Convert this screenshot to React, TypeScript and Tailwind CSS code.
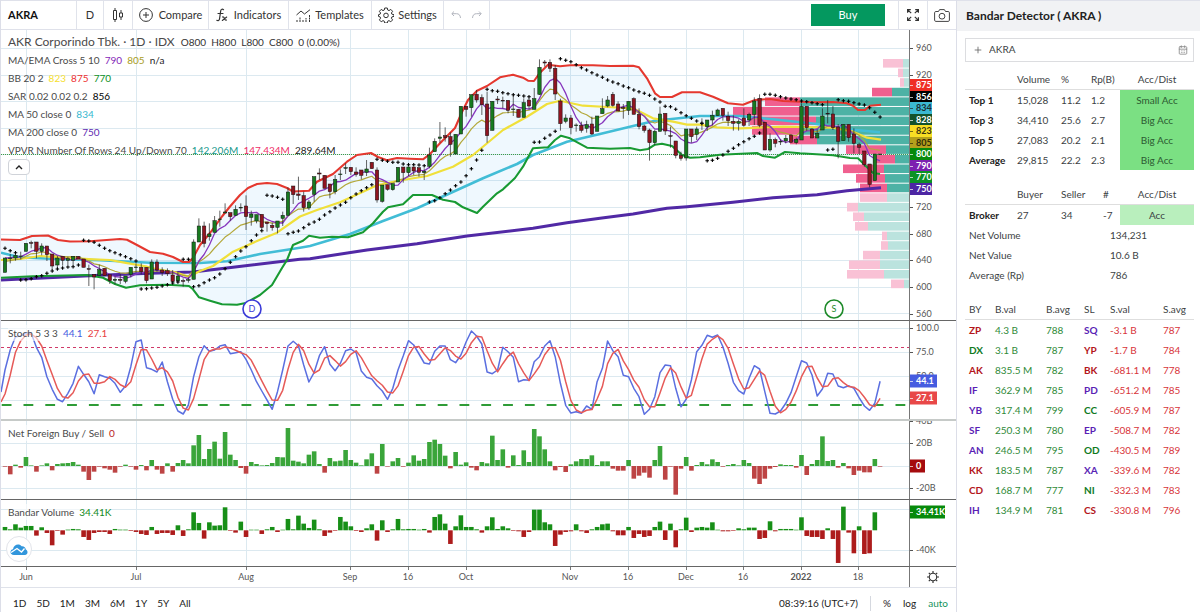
import type { ReactNode } from "react";
import { CalendarDays, Plus } from "lucide-react";

// Vertical values of the price and stochastic data are stored at 3x resolution.
const UNIT = 3;
const STEP = 5.24;
const barX = (i: number) => 5 + i * STEP;

const MONTHS: [number, string, boolean?][] = [
  [26, "Jun"],
  [136, "Jul"],
  [246, "Aug"],
  [350, "Sep"],
  [408, "16"],
  [466, "Oct"],
  [570, "Nov"],
  [628, "16"],
  [686, "Dec"],
  [743, "16"],
  [801, "2022", true],
  [858, "18"],
];

// [high, body top, body bottom, low, up]
const CANDLES: number[][] = [
  [774, 774, 817, 817, 1], [762, 774, 776, 790, 1], [758, 766, 774, 782, 1], [755, 768, 770, 778, 1],
  [730, 730, 754, 754, 1], [722, 728, 730, 745, 0], [726, 726, 754, 775, 0], [730, 738, 754, 766, 1],
  [738, 738, 764, 783, 0], [762, 762, 798, 810, 0], [768, 774, 795, 805, 1], [769, 769, 781, 797, 0],
  [770, 776, 781, 795, 1], [769, 769, 781, 796, 1], [769, 769, 777, 777, 0], [777, 777, 802, 802, 0],
  [794, 806, 808, 858, 0], [823, 823, 831, 868, 0], [794, 809, 826, 826, 1], [805, 805, 827, 827, 0],
  [824, 824, 842, 852, 0], [829, 838, 841, 853, 1], [822, 838, 841, 852, 0], [828, 828, 844, 850, 1],
  [802, 802, 823, 832, 1], [790, 801, 803, 818, 1], [790, 802, 815, 823, 0], [802, 802, 842, 850, 0],
  [778, 786, 837, 837, 1], [778, 786, 810, 815, 0], [802, 810, 818, 828, 0], [805, 812, 821, 828, 0],
  [810, 825, 845, 852, 0], [815, 828, 843, 850, 1], [835, 842, 844, 860, 0], [832, 839, 841, 848, 1],
  [718, 726, 838, 838, 1], [655, 678, 726, 726, 1], [665, 678, 730, 742, 0], [670, 702, 710, 722, 1],
  [648, 662, 697, 697, 1], [632, 657, 659, 680, 1], [610, 636, 639, 640, 1], [638, 638, 650, 662, 0],
  [616, 628, 646, 646, 1], [610, 622, 624, 635, 1], [586, 618, 650, 690, 0], [632, 642, 652, 677, 1],
  [644, 644, 663, 670, 1], [643, 643, 682, 688, 0], [666, 666, 671, 695, 0], [668, 676, 683, 692, 0],
  [663, 663, 682, 700, 1], [635, 646, 655, 678, 1], [562, 576, 646, 646, 1], [558, 558, 584, 612, 0],
  [530, 582, 586, 600, 0], [575, 587, 623, 635, 0], [600, 606, 624, 630, 1], [530, 530, 583, 605, 1],
  [505, 519, 522, 540, 0], [526, 526, 565, 565, 0], [552, 552, 575, 595, 0], [525, 538, 575, 583, 1],
  [508, 522, 524, 540, 1], [490, 503, 505, 522, 1], [502, 502, 515, 525, 0], [502, 516, 523, 530, 0],
  [510, 510, 526, 538, 0], [480, 507, 517, 528, 1], [487, 487, 506, 506, 0], [502, 510, 600, 608, 0],
  [555, 555, 604, 608, 1], [554, 554, 568, 572, 0], [551, 551, 569, 572, 1], [502, 502, 546, 546, 1],
  [501, 501, 518, 548, 0], [501, 501, 518, 528, 1], [501, 501, 513, 525, 0], [503, 503, 517, 530, 0],
  [505, 514, 518, 540, 1], [443, 465, 499, 505, 1], [415, 424, 455, 455, 1], [366, 411, 415, 428, 1],
  [382, 407, 413, 425, 0], [397, 410, 433, 470, 0], [403, 403, 462, 462, 1], [319, 319, 402, 402, 1],
  [319, 319, 328, 350, 0], [284, 284, 323, 350, 1], [270, 283, 300, 308, 0], [283, 293, 314, 345, 0],
  [275, 312, 407, 428, 0], [304, 304, 391, 391, 1], [288, 297, 300, 312, 0], [290, 301, 303, 325, 0],
  [301, 301, 331, 340, 0], [285, 327, 329, 348, 1], [328, 328, 352, 352, 0], [295, 308, 352, 352, 1],
  [293, 300, 318, 328, 0], [264, 296, 328, 328, 1], [178, 202, 283, 285, 1], [180, 186, 189, 200, 0],
  [178, 187, 205, 216, 0], [195, 205, 282, 300, 0], [296, 303, 371, 392, 0], [343, 354, 364, 370, 1],
  [345, 354, 383, 403, 0], [370, 375, 377, 395, 1], [365, 376, 391, 398, 0], [362, 374, 385, 398, 1],
  [350, 372, 402, 405, 0], [348, 348, 394, 394, 1], [295, 326, 341, 341, 1], [288, 300, 318, 322, 1],
  [276, 283, 316, 320, 0], [304, 312, 333, 333, 0], [312, 323, 325, 356, 0], [304, 304, 331, 345, 1],
  [292, 296, 343, 343, 0], [325, 343, 380, 388, 0], [374, 378, 391, 398, 0], [386, 390, 428, 482, 0],
  [390, 394, 428, 435, 1], [320, 342, 394, 394, 1], [340, 340, 393, 405, 0], [380, 407, 409, 443, 0],
  [423, 423, 466, 475, 0], [455, 466, 475, 482, 0], [387, 387, 474, 482, 1], [387, 387, 410, 428, 0],
  [380, 387, 403, 420, 1], [355, 369, 371, 390, 1], [360, 360, 380, 393, 1], [332, 346, 360, 376, 1],
  [326, 330, 347, 347, 1], [325, 325, 346, 362, 0], [335, 349, 362, 378, 0], [346, 364, 370, 392, 0],
  [358, 365, 370, 392, 1], [325, 354, 376, 380, 0], [338, 343, 360, 378, 1], [292, 303, 343, 375, 1],
  [283, 295, 376, 382, 0], [365, 367, 450, 450, 0], [400, 418, 450, 455, 1], [413, 419, 430, 442, 0],
  [418, 424, 426, 435, 1], [405, 415, 423, 430, 1], [403, 405, 427, 427, 0], [413, 418, 428, 433, 1],
  [310, 319, 420, 420, 1], [319, 319, 383, 392, 0], [385, 387, 414, 414, 0], [388, 400, 414, 414, 1],
  [325, 348, 390, 390, 1], [300, 340, 342, 370, 0], [318, 342, 383, 390, 0], [372, 381, 424, 475, 0],
  [373, 373, 422, 422, 1], [373, 373, 413, 425, 0], [385, 402, 430, 460, 0], [428, 434, 442, 462, 0],
  [453, 453, 494, 500, 0], [492, 492, 553, 562, 0], [462, 462, 542, 542, 1], [462, 462, 464, 464, 1],
];

const SAR = [
  745, 752, 758, 840, 839, 836, 830, 827, 820, 813, 807, 804, 801, 800, 795, 721, 723, 727, 736, 745, 752, 758, 764,
  770, 776, 783, 867, 866, 864, 862, 858, 854, 849, 846, 778, 778, 860, 857, 848, 840, 833, 822, 806, 787, 770, 753,
  740, 722, 705, 692, 586, 588, 592, 598, 701, 697, 693, 683, 673, 666, 658, 645, 635, 624, 615, 607, 593, 582, 572,
  563, 554, 478, 481, 484, 487, 487, 492, 494, 494, 495, 497, 606, 602, 593, 581, 570, 557, 546, 527, 506, 480, 451,
  268, 272, 274, 278, 281, 284, 286, 288, 290, 427, 426, 415, 405, 394, 176, 181, 185, 194, 203, 210, 218, 225, 232,
  240, 246, 251, 258, 263, 270, 275, 280, 286, 297, 306, 319, 320, 328, 338, 347, 355, 363, 370, 482, 481, 475, 465,
  454, 445, 434, 425, 416, 409, 399, 283, 283, 286, 290, 294, 297, 299, 303, 305, 308, 311, 314, 450, 448, 299, 302,
  304, 308, 312, 315, 323, 337, 351,
];

const STOCH_K = [
  150, 90, 50, 48, 38, 40, 82, 112, 170, 208, 238, 245, 220, 190, 139, 163, 185, 221, 164, 170, 175, 190, 217, 198,
  140, 65, 60, 143, 148, 156, 126, 185, 238, 273, 282, 255, 170, 110, 77, 94, 90, 78, 74, 101, 98, 95, 118, 150, 185,
  213, 240, 268, 215, 150, 78, 64, 77, 135, 186, 157, 107, 80, 133, 152, 130, 92, 87, 98, 153, 172, 177, 197, 213,
  238, 205, 150, 108, 62, 75, 102, 129, 132, 94, 78, 78, 119, 128, 105, 66, 33, 48, 72, 156, 161, 150, 82, 95, 112,
  185, 179, 181, 125, 110, 78, 62, 110, 190, 256, 279, 275, 280, 258, 268, 185, 145, 63, 92, 110, 166, 170, 205, 230,
  283, 268, 230, 158, 135, 137, 205, 260, 238, 180, 95, 76, 46, 52, 45, 80, 130, 187, 212, 222, 175, 137, 147, 215,
  280, 282, 273, 250, 218, 170, 122, 129, 165, 228, 207, 160, 162, 198, 203, 197, 205, 233, 258, 271, 250, 184,
];

const FOREIGN = [
  -2, -25, 4, -5, 27, 1, -17, 1, 8, -13, 6, 8, 9, 12, 4, -17, -42, -17, -2, -7, -11, -20, -2, 4, -2, -11, 3, -13, 18,
  -11, -23, 8, -17, 9, 18, 8, 62, 93, 21, 51, 73, 22, 102, 34, 18, -6, -23, 12, 6, 1, 3, 9, 27, 26, 114, 16, 13, 8,
  34, 44, 6, -20, 24, 14, 16, 48, 18, 10, 2, 20, 38, -23, 66, -1, 14, 24, -2, 10, 32, 16, 21, 72, 79, 66, 31, -7, 42,
  4, 11, -5, -13, 12, 8, 91, 18, 50, -5, 32, 3, 47, 12, 111, 89, 50, 14, -13, -3, -18, 5, 14, 21, 21, 32, 3, 14, 14,
  -8, -14, -14, 18, -38, -29, -20, -35, 18, 60, -41, -2, -86, -8, 27, -14, 3, 12, 5, 20, 12, -2, 3, 6, 1, 18, 9, -38,
  -54, -38, -8, -3, 5, 3, 3, -5, 33, -27, 6, 18, 89, 15, 18, -5, 9, -7, -27, -14, -19, -19, 21, -1,
];

const BANDAR = [
  10, 3, 18, 8, 13, 13, -16, 9, -8, -45, -2, -13, 2, 4, 3, -20, -29, -8, -5, -5, -11, 4, 2, 2, -2, -5, -11, -14, 10,
  -11, -8, -8, -14, 15, -17, 3, 54, 22, -25, 24, 14, 15, 69, -1, -7, 26, -20, 1, 1, -11, 3, 10, -5, 1, 34, 3, 44, 20,
  7, 32, 3, -17, -7, -1, 40, 26, 12, -2, -5, 6, 18, -31, 30, -5, 3, 34, 3, 4, 4, 1, 4, -7, 40, 48, 20, -41, 12, 45,
  10, 10, 3, -7, 12, 39, 4, 12, 6, -1, -3, -20, -5, 62, 62, 24, 18, -47, -13, -5, -3, 18, -3, -8, 3, 10, 18, 20, -3,
  -15, -15, 10, -23, -11, -20, -17, 10, 26, -29, 20, -51, 3, 38, -5, 8, 10, 8, 24, 1, -3, -3, -1, 6, 3, 8, 8, -26,
  -23, 27, -3, 4, 4, 4, 1, 39, -17, -20, -20, -26, 6, -26, -98, 71, -7, -69, 12, -71, -69, 54,
];

const BB_UPPER =
  "1,239.5 20,240 32,236 48,235.5 58,240 70,241.5 90,241.3 100,240.5 120,239 127,239.7 137,245 150,252 163,253.7 173,257 183,262 189,262 193,258 200,245 210,233 222,216.5 230,206.5 240,195 248,188 257,184 267,183 277,184 287,188 293,191.5 309,190.7 317,181.7 333,174 347,161.7 357,155 371,153 378,157 387,160.3 397,158 410,158.7 423,159.3 430,154 440,143.3 455,128 462,112 468,100 477,90.7 487,86 500,77.3 513,74.7 523,77.7 528,80.7 534,81 540,72.7 548,64.7 560,66.3 570,65.3 593,65.3 610,66 633,65.7 639,67.3 647,78.3 655,93.3 660,97 672,97 682,92.3 700,92.3 713,96.7 728,103.3 743,104.7 755,100 770,99 783,101 813,102.3 833,102 847,103.3 853,105.7 858,110 865,110 870,105.7 881,104.7";
const BB_LOWER =
  "1,277.7 33,276.3 87,275 103,277.7 115,284 126,287.7 140,285.3 167,284.7 189,286 193,289.3 199,297.3 210,300.7 222,304.3 237,304.7 247,302.7 253,299 260,295 272,285 282,268 287,260 293,245 303,240.7 309,235.7 320,237.7 332,236.7 348,237.3 363,232.3 373,223.3 383,211.7 388,207.3 403,204.3 413,195 432,195 443,199.7 455,202 463,207.3 477,213 483,206.7 497,193.3 503,189.3 515,178 523,166.7 533,148.3 548,147.3 555,140 561,135.7 570,138.3 587,147.7 610,148.7 630,148 640,150.3 648,149 655,144.7 662,143.7 672,146 682,155 690,157.7 700,157.3 720,154.7 757,153 763,156 775,157.7 785,152 800,153.3 833,155.3 850,158 858,158.3 863,163.3 873,173 880,174";
const BB_BASIS =
  "1,260 20,259 40,256 60,257.3 93,259.3 110,260 123,262.3 147,266.7 157,269.3 177,272.7 189,276.7 200,271 213,266 233,251.7 257,241 277,232.7 300,216.5 317,210 340,202.3 363,191.7 377,185.3 397,181 427,176 453,166.7 473,155 503,130 527,116.7 547,104 560,100.7 583,105.7 607,107 633,108.3 653,118.3 673,121.7 687,124.7 700,124.7 717,127.3 740,128.3 783,126.7 833,127.7 853,131.7 867,137.7 881,139.7";
const MA_50 =
  "1,252.7 20,257.3 50,258.7 100,260.3 150,262.7 200,263 227,261.3 260,254 300,247.7 310,246 350,234 383,221 417,208.3 450,193.3 483,178.3 517,164 533,155 567,141.7 600,134 633,126 655,120.7 700,116 740,116 773,119.3 817,124 847,129.3 880,132.3";
const MA_200 =
  "1,280 100,275.3 150,273.3 193,272 233,267.3 300,259.3 310,258.7 367,250 417,243.7 467,236 533,228.3 567,222.7 600,218.3 633,214 667,208.3 687,206.7 733,202.3 773,197.7 817,194.7 847,190.7 881,187.7";

// [pink start, teal start, inside value area]
const PROFILE: [number, number, boolean][] = [
  [883, 903, false], [898, 903, false], [900, 904, false], [872, 892, true], [765, 800, true], [733, 800, true],
  [750, 816, true], [752, 800, true], [790, 817, true], [846, 886, true], [873, 895, true], [843, 884, true],
  [856, 885, true], [860, 887, true], [860, 887, false], [847, 858, false], [853, 864, false], [855, 868, false],
  [882, 887, false], [881, 888, false], [863, 880, false], [849, 880, false], [847, 884, false], [891, 904, false],
];

const closes = CANDLES.map(([, top, bottom, , up]) => (up ? top : bottom) / UNIT);

function sma(values: number[], length: number) {
  return values.map((_, i) => {
    const part = values.slice(Math.max(0, i - length + 1), i + 1);
    return part.reduce((a, b) => a + b, 0) / part.length;
  });
}

function ema(values: number[], length: number, start: number) {
  const k = 2 / (length + 1);
  let prev = start;
  return values.map((v) => (prev = v * k + prev * (1 - k)));
}

const toPoints = (values: number[]) => values.map((v, i) => `${barX(i).toFixed(1)},${v.toFixed(1)}`).join(" ");

const MA_CROSS = toPoints(sma(closes, 5));
const EMA_CROSS = toPoints(ema(closes, 10, 262));
const kLine = STOCH_K.map((v) => 320 + v / UNIT);

const PRICE_TAGS = [
  { y: 85, text: "875", bg: "#ef2e24", fg: "#fff" },
  { y: 97, text: "856", bg: "#000", fg: "#fff" },
  { y: 108, text: "834", bg: "#3bb9d3", fg: "#1c2b30" },
  { y: 120, text: "828", bg: "#13532c", fg: "#fff" },
  { y: 131, text: "823", bg: "#f8de24", fg: "#3a3510" },
  { y: 143, text: "805", bg: "#b4a01c", fg: "#2f2a08" },
  { y: 154, text: "800", bg: "#078a0b", fg: "#fff" },
  { y: 166, text: "790", bg: "#7d20b0", fg: "#fff" },
  { y: 177, text: "770", bg: "#0d9226", fg: "#fff" },
  { y: 189, text: "750", bg: "#4d26a3", fg: "#fff" },
];

const PRICE_TICKS: [number, string][] = [
  [48, "960"],
  [75, "920"],
  [207, "720"],
  [234, "680"],
  [260, "640"],
  [287, "600"],
  [314, "560"],
];

function Grid({ rows, top, height }: { rows: number[]; top: number; height: number }) {
  return (
    <g stroke="#dce9f0" shapeRendering="crispEdges">
      {MONTHS.map(([x]) => (
        <line key={x} x1={x + 0.5} x2={x + 0.5} y1={top} y2={top + height} />
      ))}
      {rows.map((y) => (
        <line key={y} x1="1" x2="909" y1={y + 0.5} y2={y + 0.5} />
      ))}
    </g>
  );
}

function Ticks({ ticks }: { ticks: [number, string][] }) {
  return (
    <>
      {ticks.map(([y, text]) => (
        <g key={text}>
          <line x1="909" x2="913" y1={y + 0.5} y2={y + 0.5} stroke="#555" />
          <text x="916" y={y + 3} fontSize="9" fill="#555">
            {text}
          </text>
        </g>
      ))}
    </>
  );
}

function Tag({ y, text, bg, fg = "#fff", width = 23, height = 12 }: {
  y: number;
  text: string;
  bg: string;
  fg?: string;
  width?: number;
  height?: number;
}) {
  return (
    <g>
      <rect x="909" y={y - height / 2} width={width} height={height} fill={bg} />
      <line x1="909" x2="913" y1={y + 0.5} y2={y + 0.5} stroke={fg} opacity="0.7" />
      <text x="916" y={y + 3} fontSize="9" fontWeight="700" fill={fg}>
        {text}
      </text>
    </g>
  );
}

function Bars({ values, zero, up, down }: { values: number[]; zero: number; up: string; down: string }) {
  return (
    <>
      {values.map((v, i) => {
        const h = Math.max(Math.abs(v) / UNIT, 0.6);
        return (
          <rect key={i} x={barX(i) - 2.3} y={v > 0 ? zero - h : zero} width="4.6" height={h} fill={v > 0 ? up : down} />
        );
      })}
    </>
  );
}

function Pane({ top, height, border, legend, axis, children }: {
  top: number;
  height: string;
  border: string;
  legend?: ReactNode;
  axis: ReactNode;
  children: ReactNode;
}) {
  const h = parseInt(height.slice(3));
  return (
    <div className={`relative flex ${border}`}>
      <svg viewBox={`1 ${top} 908 ${h}`} preserveAspectRatio="xMaxYMid meet" className={`min-w-0 flex-1 ${height}`}>
        {children}
      </svg>
      <div className="w-[47px] shrink-0 border-l border-[#777]">
        <svg viewBox={`910 ${top} 46 ${h}`} className={`w-full ${height}`}>
          {axis}
        </svg>
      </div>
      {legend}
    </div>
  );
}

function Marker({ x, label, color }: { x: number; label: string; color: string }) {
  return (
    <g>
      <circle cx={x} cy="309" r="9" fill="#fff" stroke={color} strokeWidth="1.6" />
      <text x={x} y="312" fontSize="9" textAnchor="middle" fill={color}>
        {label}
      </text>
    </g>
  );
}

function PricePane() {
  const lower = BB_LOWER.split(" ").reverse().join(" ");
  return (
    <Pane
      top={30}
      height="h-[290px]"
      border="border-b border-[#666]"
      axis={
        <>
          <Ticks ticks={PRICE_TICKS} />
          {PRICE_TAGS.map((t) => (
            <Tag key={t.text} {...t} />
          ))}
        </>
      }
      legend={
        <div className="absolute left-[7px] top-[3px] text-[10px] leading-[18px] text-[#4a4a4a]">
          <div className="flex items-center gap-1.5 whitespace-nowrap">
            <h1 className="text-xs leading-[18px]">AKR Corporindo Tbk. · 1D · IDX</h1>
            <span className="text-[#333]">O800&nbsp; H800&nbsp; L800&nbsp; C800&nbsp; 0 (0.00%)</span>
          </div>
          <p>
            MA/EMA Cross 5 10&nbsp; <span className="text-[#8528b8]">790</span>&nbsp;{" "}
            <span className="text-[#a89c1c]">805</span>&nbsp; <span className="text-[#222]">n/a</span>
          </p>
          <p>
            BB 20 2&nbsp; <span className="text-[#f6e02e]">823</span>&nbsp; <span className="text-[#ee2f2f]">875</span>
            &nbsp; <span className="text-[#0f9127]">770</span>
          </p>
          <p>
            SAR 0.02 0.02 0.2&nbsp; <span className="text-black">856</span>
          </p>
          <p>
            MA 50 close 0&nbsp; <span className="text-[#35b7cf]">834</span>
          </p>
          <p>
            MA 200 close 0&nbsp; <span className="text-[#5d2bb0]">750</span>
          </p>
          <p className="whitespace-nowrap">
            VPVR Number Of Rows 24 Up/Down 70&nbsp; <span className="text-[#16978a]">142.206M</span>&nbsp;{" "}
            <span className="text-[#ee2f68]">147.434M</span>&nbsp; <span className="text-[#222]">289.64M</span>
          </p>
          <button
            aria-label="Collapse legend"
            className="flex h-4 w-[22px] items-center justify-center rounded-sm border border-[#d0d3d9] bg-white"
          >
            <svg viewBox="0 0 8 5" className="h-[5px] w-2 fill-none stroke-[#222]">
              <path d="M1 4l3-3 3 3" strokeWidth="1.4" />
            </svg>
          </button>
        </div>
      }
    >
      <Grid rows={[48, 75, 101, 128, 154, 180, 207, 234, 260, 287, 313]} top={30} height={290} />
      <polygon points={`${BB_UPPER} ${lower}`} fill="#2196f3" opacity="0.07" />
      {PROFILE.map(([pink, teal, inside], i) => {
        const y = 59 + i * 9.59;
        return (
          <g key={i}>
            <rect x={pink} y={y} width={teal - pink} height="8.6" fill={inside ? "#f0608f" : "#f9c1d5"} />
            <rect x={teal} y={y} width={909 - teal} height="8.6" fill={inside ? "#4db2a5" : "#bbe3de"} />
          </g>
        );
      })}
      <line x1="1" x2="909" y1="154.5" y2="154.5" stroke="#3d9c45" strokeDasharray="1 1" />
      <g fill="none" strokeLinejoin="round">
        <polyline points={MA_200} stroke="#5129a5" strokeWidth="3" />
        <polyline points={MA_50} stroke="#42bdd6" strokeWidth="2.6" />
        <polyline points={BB_BASIS} stroke="#f0e03a" strokeWidth="2.2" />
        <polyline points={EMA_CROSS} stroke="#b3a83a" strokeWidth="1.2" />
        <polyline points={MA_CROSS} stroke="#8736bd" strokeWidth="1.3" />
        <polyline points={BB_UPPER} stroke="#e5382f" strokeWidth="2.1" />
        <polyline points={BB_LOWER} stroke="#189a33" strokeWidth="2.1" />
      </g>
      {CANDLES.map(([high, top, bottom, low, up], i) => (
        <g key={i}>
          <line x1={barX(i)} x2={barX(i)} y1={high / UNIT} y2={low / UNIT} stroke="#222" strokeWidth="0.7" />
          <rect
            x={barX(i) - 1.7}
            y={top / UNIT}
            width="3.4"
            height={(bottom - top) / UNIT}
            fill={up ? "#177a1f" : "#8f1420"}
            stroke="#111"
            strokeWidth="0.5"
          />
        </g>
      ))}
      <path
        d={SAR.map((v, i) => `M${(barX(i) - 1.8).toFixed(1)} ${(v / UNIT).toFixed(1)}h3.6m-1.8 -1.8v3.6`).join("")}
        stroke="#000"
        strokeWidth="1.1"
      />
      <Marker x={252} label="D" color="#3a3ad8" />
      <Marker x={834} label="S" color="#1e8a2a" />
    </Pane>
  );
}

function Legend({ name, children }: { name: string; children: ReactNode }) {
  return (
    <div className="absolute left-[7px] top-1 flex gap-[5px] bg-white/60 text-[10px] leading-4 text-[#4a4a4a]">
      <span>{name}</span>
      {children}
    </div>
  );
}

function StochPane() {
  return (
    <Pane
      top={321}
      height="h-[98px]"
      border="border-b-2 border-[#c6cac8]"
      axis={
        <>
          <Ticks ticks={[[328, "100.0"], [352, "75.0"], [376, "50.0"]]} />
          <Tag y={381} text="44.1" bg="#465ce0" width={28} height={13} />
          <Tag y={398} text="27.1" bg="#e84848" width={28} height={13} />
        </>
      }
      legend={
        <Legend name="Stoch 5 3 3">
          <span className="text-[#465ce0]">44.1</span>
          <span className="text-[#e84040]">27.1</span>
        </Legend>
      }
    >
      <Grid rows={[328, 352, 376, 400]} top={321} height={98} />
      <line x1="1" x2="909" y1="347.5" y2="347.5" stroke="#d03a68" strokeDasharray="3 3" />
      <line x1="1.7" x2="909" y1="405" y2="405" stroke="#2f9c37" strokeWidth="2" strokeDasharray="9.8 12" />
      <g fill="none" strokeWidth="1.5" strokeLinejoin="round">
        <polyline points={`1,392 ${toPoints(kLine)}`} stroke="#5b6fe0" />
        <polyline points={`1,402 5,394 10,376 ${toPoints(sma(kLine, 3)).split(" ").slice(2).join(" ")}`} stroke="#e65a58" />
      </g>
    </Pane>
  );
}

function ForeignPane() {
  return (
    <Pane
      top={421}
      height="h-[78px]"
      border="border-b border-[#666]"
      axis={
        <>
          <Ticks ticks={[[421, "40B"], [443, "20B"], [488, "-20B"]]} />
          <Tag y={466} text="0" bg="#a50b0e" width={16} height={13} />
        </>
      }
      legend={
        <Legend name="Net Foreign Buy / Sell">
          <span className="text-[#b81c1c]">0</span>
        </Legend>
      }
    >
      <Grid rows={[443, 466, 488]} top={421} height={78} />
      <Bars values={FOREIGN} zero={466} up="#3aa53a" down="#bd4444" />
    </Pane>
  );
}

function BandarPane() {
  return (
    <Pane
      top={500}
      height="h-[66px]"
      border="border-b border-[#666]"
      axis={
        <>
          <Ticks ticks={[[550, "-40K"]]} />
          <Tag y={512} text="34.41K" bg="#078a0b" width={36} height={13} />
        </>
      }
      legend={
        <>
          <Legend name="Bandar Volume">
            <span className="text-[#12891a]">34.41K</span>
          </Legend>
          <a
            href="#tradingview"
            aria-label="TradingView"
            className="absolute bottom-1 left-[5px] flex size-[26px] items-center justify-center rounded-full border border-[#e2e4ea] bg-white"
          >
            <svg viewBox="0 0 18 11" className="h-[11px] w-[18px]">
              <path d="M4 11C1.600 11 .5 9.600.5 8 .5 6.400 1.600 5.400 3 5.200 3.600 2.200 5.700.6 8 .6c1.700 0 2.700.7 3.600 1.700C14 2 15.600 3.600 15.800 5.600 17 6.200 17.600 7.200 17.500 8.500 17.400 10 16.300 11 15 11z" fill="#3196dc" />
              <path d="M1 8.500L7 4.500l4.500 3.500 3-3.500" fill="none" stroke="#fff" strokeWidth="1.300" />
            </svg>
          </a>
        </>
      }
    >
      <Grid rows={[509, 550]} top={500} height={66} />
      <Bars values={BANDAR} zero={530.3} up="#178f17" down="#ad1c1c" />
    </Pane>
  );
}

function TimeAxis() {
  return (
    <div className="flex border-b border-[#dfe2ea]">
      <svg viewBox="1 567 908 20" preserveAspectRatio="xMaxYMid meet" className="h-5 min-w-0 flex-1">
        {MONTHS.map(([x, text, strong]) => (
          <g key={x}>
            <line x1={x + 0.5} x2={x + 0.5} y1="567" y2="570" stroke="#777" />
            <text x={x} y="580" fontSize="9" textAnchor="middle" fill="#555" fontWeight={strong ? 700 : 400}>
              {text}
            </text>
          </g>
        ))}
      </svg>
      <button aria-label="Axis settings" className="flex w-[47px] shrink-0 items-center justify-center border-l border-[#777]">
        <svg viewBox="0 0 12 12" className="size-3 fill-none stroke-[#333]">
          <circle cx="6" cy="6" r="3.700" strokeWidth="1.100" />
          <path
            d="M6 0v2M6 10v2M0 6h2M10 6h2M1.800 1.800l1.300 1.300M8.900 8.900l1.300 1.300M1.800 10.200l1.300-1.300M8.900 3.100l1.300-1.300"
            strokeWidth="1.200"
          />
        </svg>
      </button>
    </div>
  );
}

function Toolbar() {
  const item = "flex h-full items-center justify-center border-r border-[#e0e3eb]";
  return (
    <header className="flex h-[30px] items-center border-b border-t border-[#dfe1ea] text-[11px] text-[#333]">
      <button className={`${item} w-[76px] pl-[7px] text-[11px] font-bold text-[#111]`}>
        <span className="flex-1 text-left">AKRA</span>
      </button>
      <button className={`${item} w-[27px]`}>D</button>
      <button aria-label="Candles" className={`${item} w-[29px]`}>
        <svg viewBox="0 0 12 14" className="h-3.5 w-3 fill-none stroke-[#333]">
          <path d="M3 0v2.500M3 11.500V14M9 2v3M9 9v3" />
          <path d="M1.500 2.500h3v9h-3zM7.500 5h3v4h-3z" />
        </svg>
      </button>
      <button className={`${item} w-[76px] gap-1.5`}>
        <svg viewBox="0 0 14 14" className="size-3.5 fill-none stroke-[#333]">
          <circle cx="7" cy="7" r="6.400" />
          <path d="M7 4v6M4 7h6" />
        </svg>
        Compare
      </button>
      <button className={`${item} w-20 gap-1.5`}>
        <svg viewBox="0 0 12 14" className="h-3.5 w-3 fill-none stroke-[#333]" strokeLinecap="round">
          <path d="M7.500 1.700C6.500.8 5 1 4.700 2.800L3.500 11c-.2 1.500-1.500 1.900-2.700 1.300M2 5.500h5" strokeWidth="1.200" />
          <path d="M6.500 9c1.300-.4 1.600.4 2 1.500.4 1.200.8 2 2 1.500M10.700 9L6.300 12.500" strokeWidth="1.100" />
        </svg>
        Indicators
      </button>
      <button className={`${item} w-[83px] gap-1`}>
        <svg viewBox="0 0 15 13" className="h-[13px] w-[15px] fill-none stroke-[#333]">
          <path d="M.5 6L5 2l3.500 3L14 .7" />
          <path d="M1 13v-2M4 13V8M7 13v-2M10 13V9M13.500 13V6" strokeDasharray="2 .5" />
        </svg>
        Templates
      </button>
      <button className={`${item} w-[72px] gap-1`}>
        <svg viewBox="0 0 16 16" className="size-4 fill-none stroke-[#333]">
          <path
            d="M6.700 1h2.600l.4 2 1.300.6 1.800-1.200 1.800 1.900-1.200 1.700.5 1.200 2.100.5v1.700l-2.100.5-.5 1.300 1.200 1.700-1.800 1.900-1.800-1.200-1.300.6-.4 1.800H6.700l-.4-1.800-1.300-.6-1.800 1.200-1.800-1.900 1.200-1.700-.5-1.300L0.500 9.400V7.700l1.600-.5.5-1.200L1.400 4.300l1.800-1.900L5 3.600 6.300 3z"
            strokeLinejoin="round"
          />
          <circle cx="8" cy="8.400" r="2.300" />
        </svg>
        Settings
      </button>
      <div className={`${item} w-[46px] gap-[11px]`}>
        <button aria-label="Undo">
          <svg viewBox="0 0 10 8" className="h-2 w-2.5 fill-none stroke-[#b2b5be]">
            <path d="M3 .5L.8 2.700 3 5M1 2.700h4.500c2.300 0 3.800 1.300 4 4.300" />
          </svg>
        </button>
        <button aria-label="Redo">
          <svg viewBox="0 0 10 8" className="h-2 w-2.5 fill-none stroke-[#b2b5be]">
            <path d="M7 .5l2.200 2.200L7 5M9 2.700H4.500C2.200 2.700.7 4 .5 7" />
          </svg>
        </button>
      </div>
      <div className={`${item} flex-1 pr-[13px]`}>
        <span className="flex-1" />
        <button className="h-[22px] w-[74px] bg-[#04985f] text-white">Buy</button>
      </div>
      <button aria-label="Fullscreen" className={`${item} w-[29px]`}>
        <svg viewBox="0 0 12 12" className="size-3 fill-none stroke-[#333]" strokeWidth="1.200">
          <path d="M.6 3.800V.6h3.200M.8.800l3.400 3.400M8.200.6h3.200v3.200M11.200.8L7.800 4.200M.6 8.200v3.200h3.200M.8 11.200l3.400-3.400M8.200 11.400h3.200V8.200M11.200 11.200L7.800 7.800" />
        </svg>
      </button>
      <button aria-label="Snapshot" className="flex h-full w-7 items-center justify-center">
        <svg viewBox="0 0 16 13" className="h-[13px] w-4 fill-none stroke-[#444]">
          <path d="M4.500 2.500L5.600.6h4.800l1.100 1.900h2.700c.7 0 1.200.5 1.200 1.200v7.500c0 .7-.5 1.200-1.200 1.200H1.800c-.7 0-1.200-.5-1.200-1.200V3.700c0-.7.5-1.200 1.200-1.200z" />
          <circle cx="8" cy="7.200" r="2.900" />
        </svg>
      </button>
    </header>
  );
}

function BottomBar() {
  return (
    <footer className="flex h-6 items-center pl-3 pr-2 pt-1.5 text-[10px] text-[#222]">
      <div className="flex gap-2.5">
        {["1D", "5D", "1M", "3M", "6M", "1Y", "5Y", "All"].map((range) => (
          <button key={range}>{range}</button>
        ))}
      </div>
      <span className="ml-auto border-r border-[#d5d8df] pr-3">08:39:16 (UTC+7)</span>
      <button className="ml-3">%</button>
      <button className="ml-3">log</button>
      <button className="ml-3 text-[#14945c]">auto</button>
    </footer>
  );
}

const SUMMARY = [
  ["Top 1", "15,028", "11.2", "1.2", "Small Acc"],
  ["Top 3", "34,410", "25.6", "2.7", "Big Acc"],
  ["Top 5", "27,083", "20.2", "2.1", "Big Acc"],
  ["Average", "29,815", "22.2", "2.3", "Big Acc"],
];

const TOTALS = [
  ["Net Volume", "134,231"],
  ["Net Value", "10.6 B"],
  ["Average (Rp)", "786"],
];

const RED = "text-[#b3161b]";
const GREEN = "text-[#0f7a1e]";
const VIOLET = "text-[#5a1fb5]";

const BROKERS = [
  ["ZP", RED, "4.3 B", "788", "SQ", VIOLET, "-3.1 B", "787"],
  ["DX", GREEN, "3.1 B", "787", "YP", RED, "-1.7 B", "784"],
  ["AK", RED, "835.5 M", "782", "BK", RED, "-681.1 M", "778"],
  ["IF", VIOLET, "362.9 M", "785", "PD", VIOLET, "-651.2 M", "785"],
  ["YB", VIOLET, "317.4 M", "799", "CC", GREEN, "-605.9 M", "787"],
  ["SF", VIOLET, "250.3 M", "780", "EP", VIOLET, "-508.7 M", "782"],
  ["AN", VIOLET, "246.5 M", "795", "OD", GREEN, "-430.5 M", "789"],
  ["KK", RED, "183.5 M", "787", "XA", VIOLET, "-339.6 M", "782"],
  ["CD", RED, "168.7 M", "777", "NI", GREEN, "-332.3 M", "783"],
  ["IH", VIOLET, "134.9 M", "781", "CS", RED, "-330.8 M", "796"],
];

function DetectorPanel() {
  return (
    <aside className="w-[243px] shrink-0 text-[10px] leading-5 text-[#3c3f44]">
      <h2 className="flex h-[31px] items-center border-t border-[#dfe1ea] bg-[#f1f2f4] pl-[9px] text-xs font-bold text-[#222]">
        Bandar Detector ( AKRA )
      </h2>
      <div className="pl-2 pr-1.5 pt-[7px]">
        <div className="flex h-6 items-center border border-[#dcdde0] pl-[7px] pr-[5px]">
          <Plus className="size-2.5 text-[#666]" strokeWidth={2} />
          <input
            aria-label="Symbol"
            defaultValue="AKRA"
            className="ml-1.5 h-full min-w-0 flex-1 pb-0.5 text-[10px] outline-none"
          />
          <CalendarDays className="size-2.5 text-[#888]" strokeWidth={2} />
        </div>

        <table className="mt-[7px] w-full table-fixed text-left">
          <thead>
            <tr className="border-b border-[#dedede] [&>th]:font-normal">
              <th className="w-[52px]"></th>
              <th className="w-11">Volume</th>
              <th className="w-[30px]">%</th>
              <th className="w-[29px]">Rp(B)</th>
              <th className="text-center">Acc/Dist</th>
            </tr>
          </thead>
          <tbody>
            {SUMMARY.map(([label, volume, percent, value, verdict]) => (
              <tr key={label}>
                <th className="pl-1 font-bold text-[#222]">{label}</th>
                <td>{volume}</td>
                <td>{percent}</td>
                <td>{value}</td>
                <td className="bg-[#7be083] text-center text-[#2c5a32]">{verdict}</td>
              </tr>
            ))}
          </tbody>
        </table>

        <table className="mt-[14px] w-full table-fixed text-left">
          <thead>
            <tr className="border-b border-[#dedede] [&>th]:font-normal">
              <th className="w-[52px]"></th>
              <th className="w-11">Buyer</th>
              <th className="w-[30px]">Seller</th>
              <th className="w-[29px] pl-3">#</th>
              <th className="text-center">Acc/Dist</th>
            </tr>
          </thead>
          <tbody>
            <tr>
              <th className="pl-1 font-bold text-[#222]">Broker</th>
              <td>27</td>
              <td>34</td>
              <td className="pl-3">-7</td>
              <td className="bg-[#b9efbd] text-center">Acc</td>
            </tr>
          </tbody>
        </table>

        <dl>
          {TOTALS.map(([label, value]) => (
            <div key={label} className="flex pl-1">
              <dt className="w-[141px]">{label}</dt>
              <dd>{value}</dd>
            </div>
          ))}
        </dl>

        <table className="mt-[14px] w-full table-fixed text-left">
          <thead>
            <tr className="border-b border-[#dedede] [&>th]:font-normal">
              <th className="w-[30px] pl-1">BY</th>
              <th className="w-[51px]">B.val</th>
              <th className="w-[38px]">B.avg</th>
              <th className="w-[26px]">SL</th>
              <th className="w-[53px]">S.val</th>
              <th>S.avg</th>
            </tr>
          </thead>
          <tbody>
            {BROKERS.map(([buyer, buyerColor, buyVal, buyAvg, seller, sellerColor, sellVal, sellAvg]) => (
              <tr key={buyer}>
                <td className={`pl-1 font-bold ${buyerColor}`}>{buyer}</td>
                <td className="text-[#2f8a38]">{buyVal}</td>
                <td className="text-[#2f8a38]">{buyAvg}</td>
                <td className={`font-bold ${sellerColor}`}>{seller}</td>
                <td className="text-[#d8343a]">{sellVal}</td>
                <td className="text-[#d8343a]">{sellAvg}</td>
              </tr>
            ))}
          </tbody>
        </table>
      </div>
    </aside>
  );
}

export default function App() {
  return (
    <div className="flex bg-white font-['Lato',sans-serif]">
      <main className="min-w-0 flex-1 border-x border-[#dcdee8]">
        <Toolbar />
        <PricePane />
        <StochPane />
        <ForeignPane />
        <BandarPane />
        <TimeAxis />
        <BottomBar />
      </main>
      <DetectorPanel />
    </div>
  );
}
